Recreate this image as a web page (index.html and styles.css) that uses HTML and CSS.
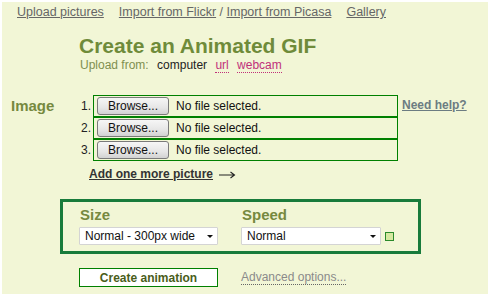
FILE: index.html
```html
<!DOCTYPE html>
<html lang="en">
<head>
    <meta charset="UTF-8">
    <meta name="viewport" content="width=device-width, initial-scale=1.0">
    <title>Create an Animated GIF</title>
    <link rel="stylesheet" href="styles.css">
</head>
<body>
    <div class="page">
        <!-- top navigation -->
        <div class="topnav">
            <a href="#">Upload pictures</a>
            <span class="pair"><a href="#">Import from Flickr</a> / <a href="#">Import from Picasa</a></span>
            <a href="#">Gallery</a>
        </div>

        <div class="header">
            <h1>Create an Animated GIF</h1>
            <p class="upload-from">
                <span class="from-label">Upload from:</span>
                <span class="source current">computer</span>
                <a class="source" href="#">url</a>
                <a class="source" href="#">webcam</a>
            </p>
        </div>

        <!-- picture inputs -->
        <div class="image-section">
            <div class="section-label">Image</div>
            <div class="files">
                <div class="file-row">
                    <span class="num">1.</span>
                    <div class="file-box"><span class="browse">Browse...</span><span class="file-name">No file selected.</span></div>
                </div>
                <div class="file-row">
                    <span class="num">2.</span>
                    <div class="file-box"><span class="browse">Browse...</span><span class="file-name">No file selected.</span></div>
                </div>
                <div class="file-row">
                    <span class="num">3.</span>
                    <div class="file-box"><span class="browse">Browse...</span><span class="file-name">No file selected.</span></div>
                </div>
                <div class="add-more">
                    <a href="#">Add one more picture</a>
                    <svg class="arrow" width="17" height="8" viewBox="0 0 17 8"><path d="M0 4h15M11.5 1l4 3-4 3" fill="none" stroke="#222" stroke-width="1.1"/></svg>
                </div>
            </div>
            <a class="help" href="#">Need help?</a>
        </div>

        <!-- size and speed -->
        <div class="settings">
            <div class="setting">
                <div class="setting-label">Size</div>
                <div class="select-wrap">
                    <select>
                        <option>Normal - 300px wide</option>
                    </select>
                </div>
            </div>
            <div class="setting">
                <div class="setting-label">Speed</div>
                <div class="speed-row">
                    <div class="select-wrap wide">
                        <select>
                            <option>Normal</option>
                        </select>
                    </div>
                    <span class="swatch"></span>
                </div>
            </div>
        </div>

        <div class="actions">
            <button class="create">Create animation</button>
            <a class="advanced" href="#">Advanced options...</a>
        </div>
    </div>
</body>
</html>
```

FILE: styles.css
```css
html, body {
    margin: 0;
    padding: 0;
    background: #fff;
}
body {
    font-family: Arial, "Liberation Sans", sans-serif;
    font-size: 12px;
    color: #222;
}
.page {
    margin: 2px 2px 0 2px;
    min-height: 292px;
    background: #f2f6d6;
    box-sizing: border-box;
    padding-top: 3px;
}
.topnav {
    padding-left: 15px;
    font-size: 12.5px;
    line-height: 15px;
    display: flex;
    gap: 15px;
    color: #666;
}
.topnav a {
    color: #666;
}
.header {
    margin-top: 14px;
    padding-left: 77px;
}
.header h1 {
    margin: 0;
    font-size: 21px;
    line-height: 24px;
    color: #6f8b3a;
}
.upload-from {
    margin: 0;
    padding-left: 1px;
    line-height: 15px;
}
.from-label {
    color: #7f8f4f;
    margin-right: 5px;
}
.source {
    margin-right: 5px;
    color: #222;
}
a.source {
    color: #c0307a;
    text-decoration: none;
    border-bottom: 1px dotted #c0307a;
}
.image-section {
    margin-top: 22px;
    display: flex;
    align-items: flex-start;
}
.section-label {
    width: 77px;
    box-sizing: border-box;
    padding-left: 9px;
    padding-top: 2px;
    font-size: 15px;
    line-height: 18px;
    font-weight: bold;
    color: #76893f;
}
.file-row {
    display: flex;
    align-items: flex-start;
}
.num {
    width: 12px;
    font-size: 12px;
    line-height: 14px;
    padding-left: 2px;
    padding-top: 4px;
    color: #222;
}
.file-box {
    width: 305px;
    height: 22px;
    box-sizing: border-box;
    border: 1px solid #008000;
    display: flex;
    align-items: center;
    padding-left: 3px;
}
.browse {
    width: 72px;
    height: 18px;
    box-sizing: border-box;
    border: 1px solid #7a7a7a;
    border-radius: 3px;
    background: linear-gradient(#f6f6f6, #e6e6e6 60%, #d2d2d2);
    text-align: center;
    font-size: 12px;
    line-height: 16px;
    color: #111;
}
.file-name {
    margin-left: 7px;
    font-size: 12px;
    color: #111;
}
.add-more {
    margin-top: 6px;
    padding-left: 10px;
    display: flex;
    align-items: center;
    gap: 6px;
    line-height: 14px;
}
.add-more a {
    font-size: 12px;
    font-weight: bold;
    color: #333;
}
.arrow {
    margin-top: 1px;
}
.help {
    margin-left: 4px;
    margin-top: 3px;
    font-size: 12px;
    font-weight: bold;
    line-height: 14px;
    color: #6c7c82;
}
.settings {
    margin: 18px 0 0 58px;
    width: 361px;
    height: 55px;
    box-sizing: border-box;
    border: 3px solid #187b3b;
    padding: 4px 0 0 16px;
    display: flex;
}
.setting {
    width: 162px;
}
.setting-label {
    font-size: 15px;
    line-height: 17px;
    font-weight: bold;
    color: #76893f;
    padding-left: 1px;
}
.select-wrap {
    position: relative;
    margin-top: 4px;
    width: 139px;
}
.select-wrap::after {
    content: "";
    position: absolute;
    right: 5px;
    top: 8px;
    border-left: 3px solid transparent;
    border-right: 3px solid transparent;
    border-top: 3px solid #111;
}
.select-wrap select {
    appearance: none;
    width: 100%;
    height: 18px;
    margin: 0;
    border: 1px solid #d4d4d4;
    border-radius: 1px;
    background: #fff;
    font-family: Arial, "Liberation Sans", sans-serif;
    font-size: 12px;
    color: #111;
    padding: 0 0 0 5px;
    line-height: 16px;
}
.speed-row {
    display: flex;
    align-items: center;
    gap: 4px;
}
.select-wrap.wide {
    width: 140px;
}
.swatch {
    margin-top: 4px;
    width: 9px;
    height: 9px;
    box-sizing: border-box;
    border: 1px solid #2a8a2a;
    background: #d5e8a0;
}
.actions {
    margin: 14px 0 0 77px;
    display: flex;
    align-items: center;
}
.create {
    width: 139px;
    height: 19px;
    margin: 0;
    padding: 0;
    border: 1px solid #008000;
    background: #fff;
    font-family: Arial, "Liberation Sans", sans-serif;
    font-size: 12px;
    font-weight: bold;
    color: #4a5d1a;
}
.advanced {
    margin-left: 23px;
    font-size: 12px;
    color: #8a8a8a;
    text-decoration: none;
    border-bottom: 1px dotted #666;
    line-height: 14px;
}
```
